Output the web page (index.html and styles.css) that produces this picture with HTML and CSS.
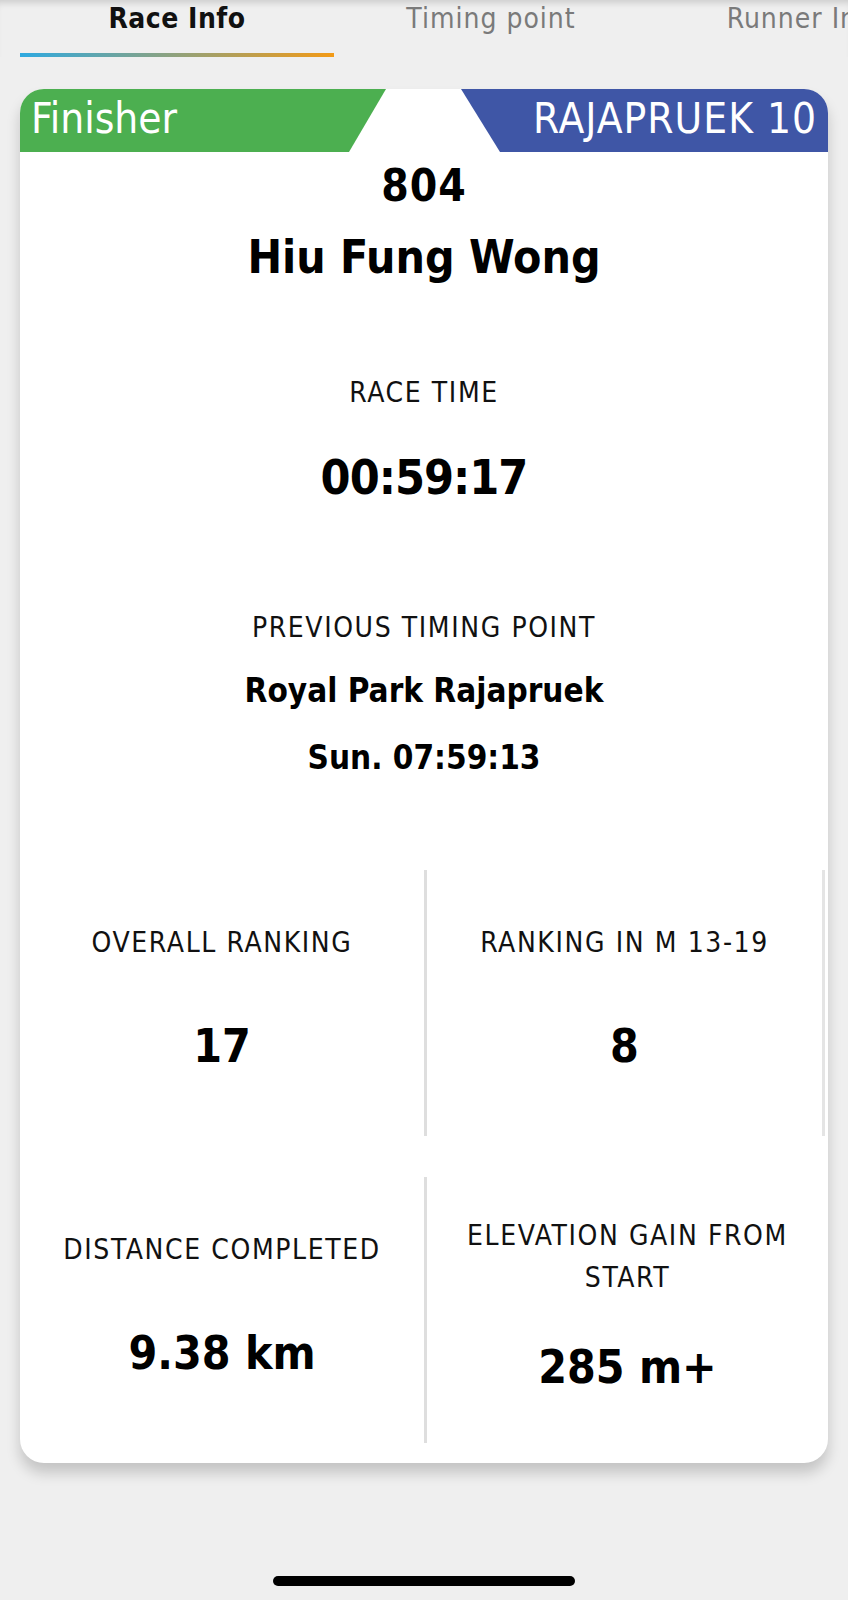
FILE: index.html
```html
<!DOCTYPE html>
<html lang="en">
<head>
  <title>Race Info</title>
  <link rel="stylesheet" href="styles.css">
</head>
<body>

  <div class="tabs">
    <div class="tab active">Race Info</div>
    <div class="tab">Timing point</div>
    <div class="tab">Runner Info</div>
  </div>

  <div class="card">
    <div class="card-head">
      <div class="status">Finisher</div>
      <div class="race">RAJAPRUEK 10</div>
    </div>

    <div class="bib">804</div>
    <div class="name">Hiu Fung Wong</div>

    <div class="label race-label">RACE TIME</div>
    <div class="time">00:59:17</div>

    <div class="label prev-label">PREVIOUS TIMING POINT</div>
    <div class="place">Royal Park Rajapruek</div>
    <div class="place stamp">Sun. 07:59:13</div>

    <div class="stats">
      <div class="cell">
        <div class="label">OVERALL RANKING</div>
        <div class="value">17</div>
      </div>
      <div class="cell right edge">
        <div class="label">RANKING IN M 13-19</div>
        <div class="value">8</div>
      </div>
      <div class="cell">
        <div class="label">DISTANCE COMPLETED</div>
        <div class="value">9.38 km</div>
      </div>
      <div class="cell right">
        <div class="label">ELEVATION GAIN FROM START</div>
        <div class="value">285 m+</div>
      </div>
    </div>
  </div>

  <div class="home-bar"></div>

</body>
</html>
```

FILE: styles.css
```css
body {
  margin: 0;
  padding: 0 20px;
  background-color: #efefef;
  font-family: "DejaVu Sans", "Liberation Sans", sans-serif;
  font-stretch: condensed;
  color: #000;
  overflow: hidden;
}

/* tab strip */
.tabs {
  display: flex;
  height: 57px;
  margin: 0 -20px;
  padding: 0 20px;
  box-shadow: inset 0 7px 6px -4px rgba(0, 0, 0, 0.14);
  overflow: hidden;
}

.tab {
  flex: 0 0 314px;
  text-align: center;
  font-size: 28px;
  line-height: 38px;
  letter-spacing: 1px;
  color: #7a7a7a;
  white-space: nowrap;
}

.tab.active {
  color: #111;
  font-weight: bold;
  letter-spacing: 0.5px;
  position: relative;
}

.tab.active::after {
  content: "";
  position: absolute;
  left: 0;
  right: 0;
  bottom: 0;
  height: 4px;
  background: linear-gradient(to right, #2ea9e0, #f39a16);
}

/* card */
.card {
  margin-top: 32px;
  background-color: #fff;
  border-radius: 24px;
  box-shadow: 0 10px 14px rgba(0, 0, 0, 0.18);
  overflow: hidden;
  padding-bottom: 20px;
  text-align: center;
}

.card-head {
  display: flex;
  justify-content: space-between;
  height: 63px;
  color: #fff;
  font-size: 42px;
  line-height: 60px;
}

.status {
  width: 366px;
  background-color: #4caf50;
  text-align: left;
  padding-left: 11px;
  box-sizing: border-box;
  clip-path: polygon(0 0, 100% 0, calc(100% - 37px) 100%, 0 100%);
}

.race {
  width: 367px;
  background-color: #3f56a6;
  text-align: right;
  padding-right: 11px;
  letter-spacing: 1px;
  box-sizing: border-box;
  clip-path: polygon(0 0, 100% 0, 100% 100%, 39px 100%);
  white-space: nowrap;
}

.bib {
  margin-top: 10px;
  font-size: 44px;
  line-height: 48px;
  letter-spacing: 1px;
  font-weight: bold;
}

.name {
  margin-top: 19px;
  font-size: 46px;
  line-height: 56px;
  font-weight: bold;
}

.label {
  font-size: 28px;
  line-height: 32px;
  letter-spacing: 1.6px;
  color: #111;
}

.race-label {
  margin-top: 92px;
}

.time {
  margin-top: 38px;
  font-size: 48px;
  line-height: 60px;
  letter-spacing: -1px;
  font-weight: bold;
}

.prev-label {
  margin-top: 105px;
}

.place {
  margin-top: 27px;
  font-size: 33px;
  line-height: 40px;
  font-weight: bold;
}

.stats {
  margin-top: 92px;
  display: grid;
  grid-template-columns: 1fr 1fr;
  grid-auto-rows: 266px;
  row-gap: 41px;
}

.cell {
  display: flex;
  flex-direction: column;
  justify-content: space-evenly;
  align-items: center;
  padding: 0 14px 8px;
}

.cell .label {
  line-height: 42px;
}

.cell.right {
  border-left: 3px solid #dedede;
}

.cell.edge {
  border-right: 3px solid #e4e4e4;
  margin-right: 3px;
}

.value {
  font-size: 46px;
  line-height: 60px;
  font-weight: bold;
}

.home-bar {
  width: 302px;
  height: 10px;
  border-radius: 5px;
  background-color: #000;
  margin: 113px auto 0;
}
```
